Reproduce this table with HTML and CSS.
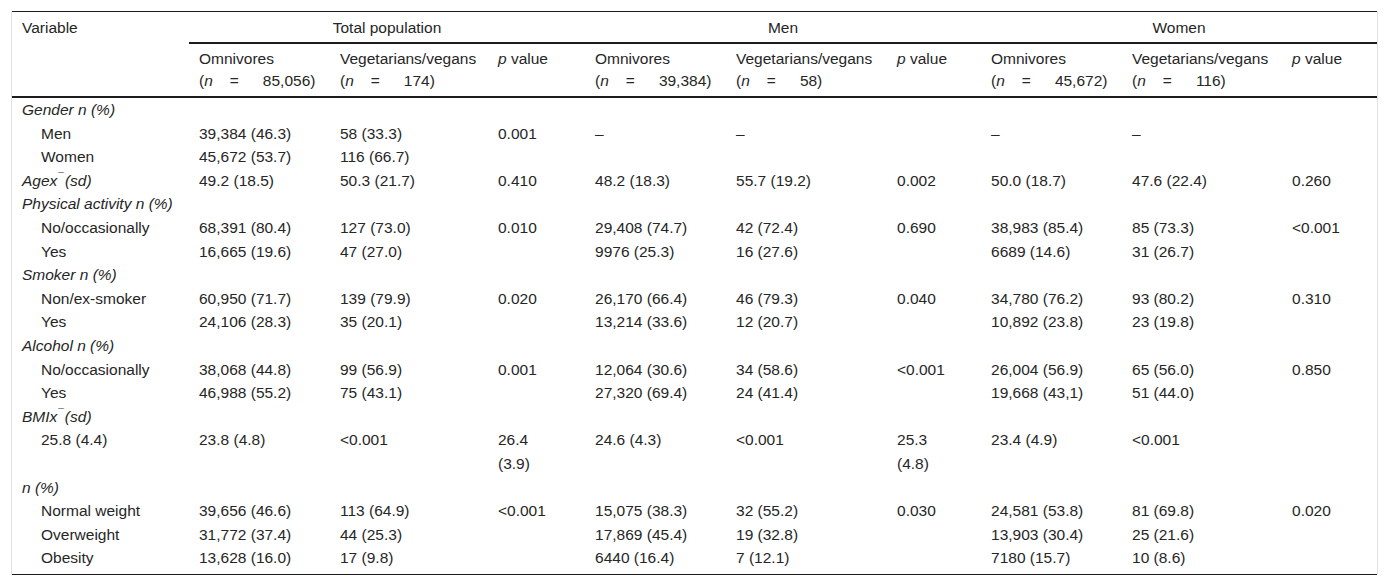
FILE: index.html
```html
<!DOCTYPE html>
<html lang="en">
<head>
<meta charset="utf-8">
<title>Table</title>
<link rel="stylesheet" href="styles.css">
</head>
<body>
<div class="wrap">
<table class="data">
<colgroup>
<col class="c-var"><col class="c-om"><col class="c-veg"><col class="c-p1">
<col class="c-om"><col class="c-veg2"><col class="c-p2">
<col class="c-om"><col class="c-veg3"><col class="c-p3">
</colgroup>
<thead>
<tr class="grp">
<th rowspan="2" class="var">Variable</th>
<th colspan="3">Total population</th>
<th colspan="3">Men</th>
<th colspan="3">Women</th>
</tr>
<tr class="sub">
<th>Omnivores<br>(<i>n</i><span class="eq">=</span>85,056)</th>
<th>Vegetarians/vegans<br>(<i>n</i><span class="eq">=</span>174)</th>
<th><i>p</i> value</th>
<th>Omnivores<br>(<i>n</i><span class="eq">=</span>39,384)</th>
<th>Vegetarians/vegans<br>(<i>n</i><span class="eq">=</span>58)</th>
<th><i>p</i> value</th>
<th>Omnivores<br>(<i>n</i><span class="eq">=</span>45,672)</th>
<th>Vegetarians/vegans<br>(<i>n</i><span class="eq">=</span>116)</th>
<th><i>p</i> value</th>
</tr>
</thead>
<tbody>
<tr><td class="cat">Gender n (%)</td><td></td><td></td><td></td><td></td><td></td><td></td><td></td><td></td><td></td></tr>
<tr><td class="ind">Men</td><td>39,384 (46.3)</td><td>58 (33.3)</td><td>0.001</td><td>–</td><td>–</td><td></td><td>–</td><td>–</td><td></td></tr>
<tr><td class="ind">Women</td><td>45,672 (53.7)</td><td>116 (66.7)</td><td></td><td></td><td></td><td></td><td></td><td></td><td></td></tr>
<tr><td class="cat">Agex<sup class="bar">¯</sup>(sd)</td><td>49.2 (18.5)</td><td>50.3 (21.7)</td><td>0.410</td><td>48.2 (18.3)</td><td>55.7 (19.2)</td><td>0.002</td><td>50.0 (18.7)</td><td>47.6 (22.4)</td><td>0.260</td></tr>
<tr><td class="cat">Physical activity n (%)</td><td></td><td></td><td></td><td></td><td></td><td></td><td></td><td></td><td></td></tr>
<tr><td class="ind">No/occasionally</td><td>68,391 (80.4)</td><td>127 (73.0)</td><td>0.010</td><td>29,408 (74.7)</td><td>42 (72.4)</td><td>0.690</td><td>38,983 (85.4)</td><td>85 (73.3)</td><td>&lt;0.001</td></tr>
<tr><td class="ind">Yes</td><td>16,665 (19.6)</td><td>47 (27.0)</td><td></td><td>9976 (25.3)</td><td>16 (27.6)</td><td></td><td>6689 (14.6)</td><td>31 (26.7)</td><td></td></tr>
<tr><td class="cat">Smoker n (%)</td><td></td><td></td><td></td><td></td><td></td><td></td><td></td><td></td><td></td></tr>
<tr><td class="ind">Non/ex-smoker</td><td>60,950 (71.7)</td><td>139 (79.9)</td><td>0.020</td><td>26,170 (66.4)</td><td>46 (79.3)</td><td>0.040</td><td>34,780 (76.2)</td><td>93 (80.2)</td><td>0.310</td></tr>
<tr><td class="ind">Yes</td><td>24,106 (28.3)</td><td>35 (20.1)</td><td></td><td>13,214 (33.6)</td><td>12 (20.7)</td><td></td><td>10,892 (23.8)</td><td>23 (19.8)</td><td></td></tr>
<tr><td class="cat">Alcohol n (%)</td><td></td><td></td><td></td><td></td><td></td><td></td><td></td><td></td><td></td></tr>
<tr><td class="ind">No/occasionally</td><td>38,068 (44.8)</td><td>99 (56.9)</td><td>0.001</td><td>12,064 (30.6)</td><td>34 (58.6)</td><td>&lt;0.001</td><td>26,004 (56.9)</td><td>65 (56.0)</td><td>0.850</td></tr>
<tr><td class="ind">Yes</td><td>46,988 (55.2)</td><td>75 (43.1)</td><td></td><td>27,320 (69.4)</td><td>24 (41.4)</td><td></td><td>19,668 (43,1)</td><td>51 (44.0)</td><td></td></tr>
<tr><td class="cat">BMIx<sup class="bar">¯</sup>(sd)</td><td></td><td></td><td></td><td></td><td></td><td></td><td></td><td></td><td></td></tr>
<tr><td class="ind">25.8 (4.4)</td><td>23.8 (4.8)</td><td>&lt;0.001</td><td>26.4<br>(3.9)</td><td>24.6 (4.3)</td><td>&lt;0.001</td><td>25.3<br>(4.8)</td><td>23.4 (4.9)</td><td>&lt;0.001</td><td></td></tr>
<tr><td class="cat">n (%)</td><td></td><td></td><td></td><td></td><td></td><td></td><td></td><td></td><td></td></tr>
<tr><td class="ind">Normal weight</td><td>39,656 (46.6)</td><td>113 (64.9)</td><td>&lt;0.001</td><td>15,075 (38.3)</td><td>32 (55.2)</td><td>0.030</td><td>24,581 (53.8)</td><td>81 (69.8)</td><td>0.020</td></tr>
<tr><td class="ind">Overweight</td><td>31,772 (37.4)</td><td>44 (25.3)</td><td></td><td>17,869 (45.4)</td><td>19 (32.8)</td><td></td><td>13,903 (30.4)</td><td>25 (21.6)</td><td></td></tr>
<tr class="last"><td class="ind">Obesity</td><td>13,628 (16.0)</td><td>17 (9.8)</td><td></td><td>6440 (16.4)</td><td>7 (12.1)</td><td></td><td>7180 (15.7)</td><td>10 (8.6)</td><td></td></tr>
</tbody>
</table>
</div>
</body>
</html>
```

FILE: styles.css
```css
html, body {
  margin: 0;
  padding: 0;
  background: #ffffff;
}

body {
  font-family: "Liberation Sans", Arial, Helvetica, sans-serif;
  font-size: 15.5px;
  color: #262626;
}

.wrap {
  margin: 11px 10px 0 11px;
  border-left: 1px solid #e2e2e2;
  border-right: 1px solid #e2e2e2;
}

.data {
  width: 100%;
  table-layout: fixed;
  border-collapse: separate;
  border-spacing: 0;
  border-top: 1px solid #1c1c1c;
  border-bottom: 1px solid #1c1c1c;
}

.c-var { width: 177px; }
.c-om { width: 141px; }
.c-veg { width: 158px; }
.c-p1 { width: 97px; }
.c-veg2 { width: 161px; }
.c-p2 { width: 94px; }
.c-veg3 { width: 160px; }
.c-p3 { width: 95px; }

th {
  font-weight: normal;
  text-align: left;
  vertical-align: top;
  line-height: 22px;
  white-space: nowrap;
}

.grp th {
  text-align: center;
  padding: 5px 10px 3px 10px;
  border-bottom: 2px solid #1c1c1c;
}

.grp th.var {
  text-align: left;
}

.sub th {
  padding: 4px 10px 4px 10px;
  border-bottom: 2px solid #1c1c1c;
}

.eq {
  margin: 0 24px 0 17px;
}

td {
  padding: 0 10px;
  line-height: 23.6px;
  vertical-align: top;
  white-space: nowrap;
}

td.cat {
  font-style: italic;
}

td.ind {
  padding-left: 29px;
}

.bar {
  font-size: 10px;
  line-height: 0;
  vertical-align: 5px;
  margin: 0 1px 0 1px;
  font-style: normal;
}

.last td {
  padding-bottom: 4px;
}
```
